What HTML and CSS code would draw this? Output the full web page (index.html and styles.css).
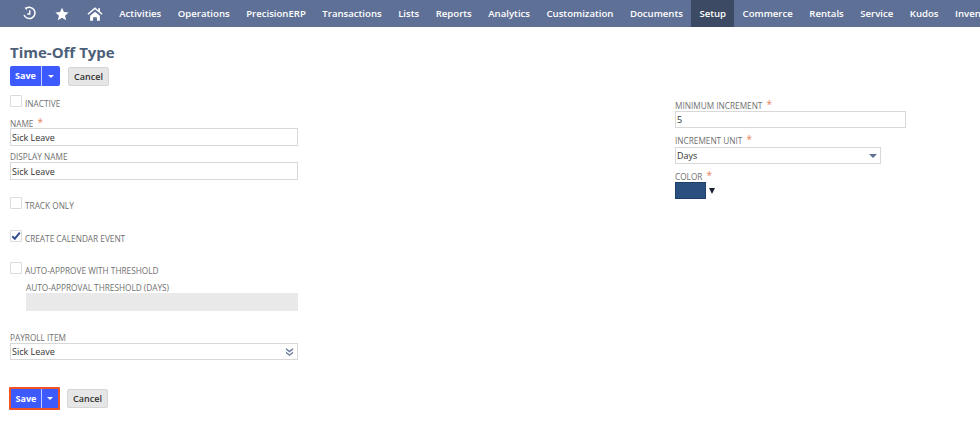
FILE: index.html
```html
<!DOCTYPE html>
<html lang="en">
<head>
<meta charset="utf-8">
<title>Time-Off Type</title>
<link rel="stylesheet" href="styles.css">
</head>
<body>
<nav class="nav">
  <div class="nav-icons">
    <svg class="icon-recent" viewBox="0 0 16 16" width="15" height="15"><path d="M4.2 2.6A6 6 0 1 1 2.2 9.5" fill="none" stroke="#fff" stroke-width="1.6"/><path d="M8.3 4.5v4H5.6" fill="none" stroke="#fff" stroke-width="1.5"/><path d="M2.6 1.6l2.6.3-.3 2.6z" fill="#fff"/></svg>
    <svg class="icon-star" viewBox="0 0 16 16" width="14" height="14"><path d="M8 .8l2.2 4.9 5.3.6-4 3.6 1.2 5.3L8 12.4l-4.7 2.8 1.2-5.3-4-3.6 5.3-.6z" fill="#fff"/></svg>
    <svg class="icon-home" viewBox="0 0 18 16" width="16" height="14"><path d="M9 .4L.4 7.6l1 1.2L9 2.6l7.6 6.2 1-1.2-2.9-2.4V1.4h-2v2.4z" fill="#fff"/><path d="M3.4 10L9 5.4l5.6 4.6v5.6h-3.4v-3.8H6.8v3.8H3.4z" fill="#fff"/></svg>
  </div>
  <a class="nav-item">Activities</a>
  <a class="nav-item">Operations</a>
  <a class="nav-item">PrecisionERP</a>
  <a class="nav-item">Transactions</a>
  <a class="nav-item">Lists</a>
  <a class="nav-item">Reports</a>
  <a class="nav-item">Analytics</a>
  <a class="nav-item">Customization</a>
  <a class="nav-item">Documents</a>
  <a class="nav-item active">Setup</a>
  <a class="nav-item">Commerce</a>
  <a class="nav-item">Rentals</a>
  <a class="nav-item">Service</a>
  <a class="nav-item">Kudos</a>
  <a class="nav-item">Inventory</a>
</nav>
<main class="page">
  <h1 class="title">Time-Off Type</h1>
  <div class="actions">
    <div class="save-group"><span class="save">Save</span><span class="save-arrow"><i class="caret"></i></span></div>
    <button class="cancel" type="button">Cancel</button>
  </div>
  <div class="columns">
    <section class="col-left">
      <div class="check-row"><span class="box"></span><span class="label">INACTIVE</span></div>
      <div class="label field-label gap-name">NAME <span class="req">*</span></div>
      <div class="input">Sick Leave</div>
      <div class="label field-label gap-display">DISPLAY NAME</div>
      <div class="input">Sick Leave</div>
      <div class="check-row gap-track"><span class="box"></span><span class="label">TRACK ONLY</span></div>
      <div class="check-row gap-calendar"><span class="box"><svg viewBox="0 0 12 12" width="12" height="12"><path d="M2.3 6.2l2.5 2.5 5-6" fill="none" stroke="#35508f" stroke-width="2"/></svg></span><span class="label">CREATE CALENDAR EVENT</span></div>
      <div class="check-row gap-auto"><span class="box"></span><span class="label">AUTO-APPROVE WITH THRESHOLD</span></div>
      <div class="indent">
        <div class="label field-label gap-threshold">AUTO-APPROVAL THRESHOLD (DAYS)</div>
        <div class="input disabled"></div>
      </div>
      <div class="label field-label gap-payroll">PAYROLL ITEM</div>
      <div class="input select payroll">Sick Leave
        <svg viewBox="0 0 10 10" width="9" height="9"><path d="M1 1l4 3 4-3v2L5 6 1 3zM1 5l4 3 4-3v2L5 10 1 7z" fill="#71809f"/></svg>
      </div>
    </section>
    <section class="col-right">
      <div class="label field-label">MINIMUM INCREMENT <span class="req">*</span></div>
      <div class="input short">5</div>
      <div class="label field-label gap-right gap-unit">INCREMENT UNIT <span class="req">*</span></div>
      <div class="input select unit short">Days<i class="tri"></i></div>
      <div class="label field-label gap-right">COLOR <span class="req">*</span></div>
      <div class="color-row"><span class="swatch"></span><i class="tri dark"></i></div>
    </section>
  </div>
  <div class="actions bottom">
    <div class="save-group outlined"><span class="save">Save</span><span class="save-arrow"><i class="caret"></i></span></div>
    <button class="cancel" type="button">Cancel</button>
  </div>
</main>
</body>
</html>
```
FILE: styles.css
```css
* { box-sizing: border-box; }
html, body { margin: 0; padding: 0; height: 441px; overflow: hidden; background: #fff; }
body { font-family: "Open Sans", "Liberation Sans", sans-serif; color: #333; }

.nav {
  display: flex;
  height: 27px;
  background: #5f7096;
  white-space: nowrap;
  overflow: hidden;
}
.nav-icons { display: flex; align-items: center; width: 111px; flex: none; padding-left: 22px; }
.icon-recent { margin-right: 18px; }
.icon-star { margin-right: 18px; }
.nav-item {
  display: flex;
  align-items: center;
  padding: 0 8.25px;
  color: #fff;
  font-size: 9.6px;
  font-weight: 600;
  flex: none;
}
.nav-item.active { background: #3c4a63; }

.page { padding: 0 10px; }
.title {
  margin: 15px 0 0;
  font-size: 15px;
  line-height: 21px;
  font-weight: 700;
  color: #4d5f79;
}
.actions { display: flex; align-items: center; gap: 8px; margin-top: 3px; height: 20px; }

.save-group { display: flex; height: 20px; width: 50px; border-radius: 2px; overflow: hidden; background: #3d5afe; }
.save { width: 32px; border-right: 1px solid #c4ccff; color: #fff; font-size: 9px; font-weight: 700; line-height: 20px; text-align: center; }
.save-arrow { flex: 1; display: flex; align-items: center; justify-content: center; }
.caret { width: 0; height: 0; border: 3px solid transparent; border-top-color: #fff; border-bottom-width: 0; }
.cancel {
  width: 41px;
  height: 19px;
  margin: 0;
  padding: 0;
  font-family: inherit;
  font-size: 9px;
  font-weight: 600;
  color: #333;
  background: #e6e6e6;
  border: 1px solid #d6d6d6;
  border-radius: 2px;
}

.columns { display: flex; height: 292px; margin-top: 9px; }
.col-left { width: 288px; flex: none; }
.col-right { width: 231px; flex: none; margin-left: 377px; padding-top: 5px; }

.label { font-size: 8.25px; line-height: 11px; color: #707070; }
.req { color: #e8835a; font-size: 10px; line-height: 8px; margin-left: 2px; vertical-align: 1px; }
.field-label { display: block; }

.check-row { display: flex; align-items: flex-start; height: 13px; }
.check-row .label { margin: 3px 0 0 3px; }
.box { width: 12px; height: 12px; border: 1px solid #dcdcdc; border-radius: 1px; background: #fff; flex: none; display: block; }
.box svg { display: block; margin: -1px; }

.input {
  height: 18px;
  border: 1px solid #d8d8d8;
  font-size: 9px;
  line-height: 18px;
  padding-left: 1px;
  color: #333;
  background: #fff;
}
.input.short, .input.payroll { height: 17px; line-height: 16px; }
.input.disabled { height: 18px; background: #e9e9e9; border: none; }
.select { display: flex; align-items: center; justify-content: space-between; padding-right: 3px; }
.unit { width: 206px; }
.tri { width: 0; height: 0; border-style: solid; border-color: #5f7096 transparent transparent; border-width: 4px 4.5px 0; }
.tri.dark { border-width: 6px 3.5px 0; border-top-color: #1a2233; margin-left: 3px; }

.gap-name { margin-top: 10px; margin-bottom: -1px; }
.gap-display { margin-top: 5px; }
.gap-track { margin-top: 17px; }
.gap-calendar { margin-top: 20px; }
.gap-auto { margin-top: 19px; }
.indent { padding-left: 16px; }
.gap-threshold { margin-top: 7px; }
.gap-payroll { margin-top: 21px; }
.gap-right { margin-top: 7px; }
.gap-unit { margin-bottom: 1px; }

.color-row { display: flex; align-items: center; }
.swatch { width: 31px; height: 17px; background: #2a5080; border: 1px solid #1f3f68; }

.actions.bottom { margin: 0 0 0 -1px; height: 23px; gap: 7px; }
.outlined { height: 23px; width: 51px; border: 2px solid #ee5225; border-radius: 1px; }
.outlined .save { line-height: 19px; width: 31px; }
```
